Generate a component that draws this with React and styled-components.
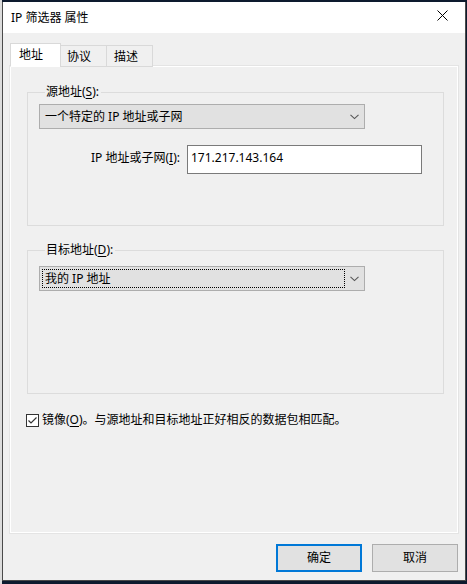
import React from "react"
import styled, { createGlobalStyle } from "styled-components"

const GlobalStyle = createGlobalStyle`
html, body {
  height: 100%;
}

body {
  margin: 0;
  font-family: "Noto Sans", "Noto Sans CJK SC", sans-serif;
  font-size: 12px;
  color: #000;
  background: linear-gradient(to right, #dcdcdc 0 2px, #0d1a2e 2px);
}
`
const Desktop = styled.div`
  height: 100vh;
  padding: 2px 0 0 2px;
  box-sizing: border-box;
`
const Window = styled.div`
  width: 464px;
  height: 579px;
  border: 1px solid #4a4a4a;
  border-top: 0;
  box-sizing: border-box;
  background: #f0f0f0;
  display: flex;
  flex-direction: column;
`
const TitleBar = styled.div`
  height: 31px;
  background: #fff;
  display: flex;
  align-items: center;
  justify-content: space-between;
  padding: 1px 0 1px 8px;
  box-sizing: border-box;
`
const Title = styled.span`
  line-height: 16px;
`
const CloseButton = styled.div`
  width: 46px;
  height: 29px;
  display: flex;
  align-items: center;
  justify-content: center;
  margin-top: -4px;
`
const Body = styled.div`
  flex: 1;
  display: flex;
  flex-direction: column;
  padding: 10px 7px 8px 7px;
`
const TabBar = styled.div`
  display: flex;
  align-items: flex-end;
  height: 24px;
  position: relative;
  z-index: 1;
  margin-bottom: -1px;
`
const Tab = styled.div`
  width: ${p => p.$width}px;
  height: ${p => (p.$active ? 24 : 22)}px;
  padding-left: ${p => p.$pad}px;
  box-sizing: border-box;
  margin-left: ${p => (p.$first ? 0 : -1)}px;
  border: 1px solid #d9d9d9;
  border-bottom: ${p => (p.$active ? "1px solid #fff" : "1px solid #d9d9d9")};
  background: ${p => (p.$active ? "#fff" : "#f0f0f0")};
  display: flex;
  align-items: center;
  line-height: 16px;
  ${p => (p.$active ? "padding-top: 0;" : "padding-top: 1px;")}
`
const Panel = styled.div`
  height: 467px;
  border: 1px solid #fff;
  box-shadow: 0 0 0 1px #e4e4e4;
  box-sizing: border-box;
  padding: 17px 13px 0 16px;
  display: flex;
  flex-direction: column;
`
const Group = styled.fieldset`
  margin: ${p => p.$top}px 0 0 0;
  padding: 0 11px ${p => p.$bottom}px 11px;
  border: 1px solid #dcdcdc;
  min-width: 0;
`
const Legend = styled.legend`
  margin-left: 6px;
  padding: 0 2px 0 1px;
  line-height: 16px;
`
const Key = styled.span`
  text-decoration: underline;
  text-underline-offset: 2px;
`
const Select = styled.div`
  width: 326px;
  height: 25px;
  margin-top: ${p => p.$top}px;
  border: 1px solid #adadad;
  background: #e1e1e1;
  box-sizing: border-box;
  display: flex;
  align-items: center;
  padding: 2px 0 2px 2px;
`
const SelectText = styled.div`
  flex: 1;
  height: 19px;
  display: flex;
  align-items: center;
  padding-left: 2px;
  box-sizing: border-box;
  border: 1px dotted ${p => (p.$focused ? "#000" : "transparent")};
  line-height: 16px;
`
const Chevron = styled.div`
  width: 19px;
  display: flex;
  justify-content: center;
  align-items: center;
`
const FieldRow = styled.div`
  display: grid;
  grid-template-columns: 141px 235px;
  column-gap: 7px;
  margin-top: 16px;
`
const FieldLabel = styled.label`
  text-align: right;
  padding-top: 5px;
  line-height: 16px;
`
const TextBox = styled.div`
  height: 29px;
  border: 1px solid #7a7a7a;
  background: #fff;
  box-sizing: border-box;
  padding: 4px 3px;
  line-height: 16px;
`
const CheckRow = styled.label`
  display: flex;
  align-items: center;
  gap: 3px;
  margin: 18px 0 0 -1px;
  line-height: 16px;
`
const CheckBox = styled.span`
  width: 13px;
  height: 13px;
  border: 1px solid #333;
  background: #fff;
  box-sizing: border-box;
  display: flex;
  align-items: center;
  justify-content: center;
`
const ButtonRow = styled.div`
  display: flex;
  justify-content: flex-end;
  gap: 10px;
  margin-top: 11px;
  padding-right: 0;
`
const Button = styled.button`
  width: 86px;
  height: 28px;
  font: inherit;
  color: #000;
  background: #e1e1e1;
  border: ${p => (p.$default ? "2px solid #0078d7" : "1px solid #adadad")};
  box-sizing: border-box;
  padding: 0;
  line-height: 16px;
`

function ChevronIcon() {
  return (
    <svg width="9" height="6" viewBox="0 0 9 6">
      <polyline points="0.5,0.8 4.5,4.6 8.5,0.8" fill="none" stroke="#555" strokeWidth="1.1" />
    </svg>
  )
}

function App() {
  return (
    <Desktop>
      <GlobalStyle />
      <Window>
        <TitleBar>
          <Title>IP 筛选器 属性</Title>
          <CloseButton>
            <svg width="11" height="11" viewBox="0 0 11 11">
              <path d="M0.5 0.5 L10.5 10.5 M10.5 0.5 L0.5 10.5" stroke="#000" strokeWidth="1" />
            </svg>
          </CloseButton>
        </TitleBar>
        <Body>
          <TabBar>
            <Tab $active $first $width={51} $pad={8}>地址</Tab>
            <Tab $width={47} $pad={6}>协议</Tab>
            <Tab $width={47} $pad={7}>描述</Tab>
          </TabBar>
          <Panel>
            <Group $top={0} $bottom={51}>
              <Legend>源地址(<Key>S</Key>):</Legend>
              <Select $top={4}>
                <SelectText>一个特定的 IP 地址或子网</SelectText>
                <Chevron><ChevronIcon /></Chevron>
              </Select>
              <FieldRow>
                <FieldLabel>IP 地址或子网(<Key>I</Key>):</FieldLabel>
                <TextBox>171.217.143.164</TextBox>
              </FieldRow>
            </Group>
            <Group $top={16} $bottom={102}>
              <Legend>目标地址(<Key>D</Key>):</Legend>
              <Select $top={8}>
                <SelectText $focused>我的 IP 地址</SelectText>
                <Chevron><ChevronIcon /></Chevron>
              </Select>
            </Group>
            <CheckRow>
              <CheckBox>
                <svg width="11" height="11" viewBox="0 0 11 11">
                  <polyline points="1.5,5.5 4,8 9.5,2.5" fill="none" stroke="#333" strokeWidth="1.2" />
                </svg>
              </CheckBox>
              <span>镜像(<Key>O</Key>)。与源地址和目标地址正好相反的数据包相匹配。</span>
            </CheckRow>
          </Panel>
          <ButtonRow>
            <Button $default>确定</Button>
            <Button>取消</Button>
          </ButtonRow>
        </Body>
      </Window>
    </Desktop>
  )
}

export default App
